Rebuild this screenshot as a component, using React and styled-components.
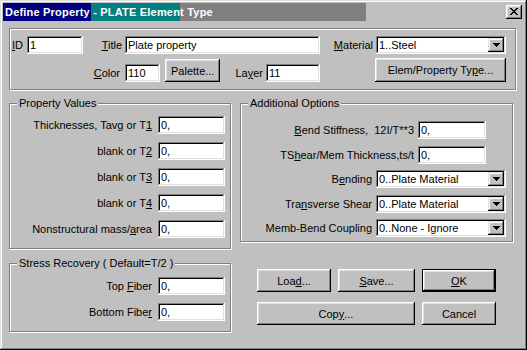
import React from 'react'
import styled, { createGlobalStyle } from 'styled-components'

const Global = createGlobalStyle`
  html, body { margin: 0; padding: 0; background: #c0c0c0; }
  body {
    font-family: "Liberation Sans", Arial, sans-serif;
    font-size: 11px;
    color: #000;
  }
  * { box-sizing: border-box; }
`

const Window = styled.div`
  width: 527px;
  height: 350px;
  background: #c0c0c0;
  padding: 3px;
  box-shadow: inset -1px -1px #000, inset 1px 1px #dfdfdf,
    inset -2px -2px #808080, inset 2px 2px #fff;
  display: flex;
  flex-direction: column;
`

const TitleBar = styled.div`
  height: 18px;
  display: flex;
  align-items: center;
  justify-content: space-between;
  padding: 0 2px;
  background: linear-gradient(
    to right,
    #000080 0 88px,
    #008080 88px 177px,
    #808080 177px 363px,
    #c0c0c0 363px
  );
`

const TitleText = styled.span`
  color: #fff;
  font-weight: bold;
  font-size: 11px;
  letter-spacing: 0.2px;
`

const CloseBtn = styled.div`
  width: 16px;
  height: 14px;
  display: flex;
  align-items: center;
  justify-content: center;
  background: #c0c0c0;
  box-shadow: inset -1px -1px #000, inset 1px 1px #fff,
    inset -2px -2px #808080, inset 2px 2px #dfdfdf;
  padding: 0 1px 1px 0;
`

const Content = styled.div`
  padding: 7px 0 0 6px;
`

const Group = styled.div`
  position: relative;
  width: ${p => p.$w}px;
  height: ${p => p.$h}px;
  border: 1px solid #808080;
  box-shadow: inset 1px 1px #fff, 1px 1px #fff;
`

const Legend = styled.span`
  position: absolute;
  top: -7px;
  left: 7px;
  padding: 0 2px;
  line-height: 13px;
  background: #c0c0c0;
`

const TopGrid = styled.div`
  display: grid;
  grid-template-columns: 15px 56px 42px 195px 56px 130px;
  grid-template-rows: 18px 24px;
  row-gap: 4px;
  align-items: end;
  padding: 7px 0 0 2px;
`

const Label = styled.label`
  white-space: nowrap;
  align-self: center;
  justify-self: ${p => p.$align || 'end'};
  padding-right: ${p => p.$pr ?? 3}px;
`

const RowLabel = styled(Label)`
  align-self: end;
  line-height: 18px;
`

const Field = styled.input`
  width: ${p => (p.$w ? `${p.$w}px` : '100%')};
  height: 18px;
  border: none;
  outline: none;
  margin: 0;
  padding: 0 3px;
  font: inherit;
  color: #000;
  background: #fff;
  box-shadow: inset -1px -1px #fff, inset 1px 1px #808080,
    inset -2px -2px #dfdfdf, inset 2px 2px #000;
  grid-column: ${p => p.$col || 'auto'};
`

const SelectBox = styled.div`
  height: 18px;
  display: flex;
  align-items: center;
  justify-content: space-between;
  padding: 2px 2px 2px 3px;
  background: #fff;
  white-space: nowrap;
  box-shadow: inset -1px -1px #fff, inset 1px 1px #808080,
    inset -2px -2px #dfdfdf, inset 2px 2px #000;
  grid-column: ${p => p.$col || 'auto'};
`

const ArrowBtn = styled.div`
  flex: none;
  width: 16px;
  height: 14px;
  display: flex;
  align-items: center;
  justify-content: center;
  background: #c0c0c0;
  box-shadow: inset -1px -1px #000, inset 1px 1px #dfdfdf,
    inset -2px -2px #808080, inset 2px 2px #fff;
`

const Button = styled.button`
  height: ${p => p.$h || 23}px;
  width: ${p => (p.$w ? `${p.$w}px` : '100%')};
  margin: 0;
  padding: 0;
  display: flex;
  align-items: center;
  justify-content: center;
  border: ${p => (p.$default ? '1px solid #000' : 'none')};
  font: inherit;
  color: #000;
  background: #c0c0c0;
  box-shadow: inset -1px -1px #000, inset 1px 1px #fff,
    inset -2px -2px #808080, inset 2px 2px #dfdfdf;
  grid-column: ${p => p.$col || 'auto'};
`

const SubRow = styled.div`
  display: flex;
  align-items: flex-end;
`

const Middle = styled.div`
  display: flex;
  gap: 9px;
  margin-top: 13px;
`

const Column = styled.div`
  display: flex;
  flex-direction: column;
  gap: ${p => p.$gap || 0}px;
`

const FormGrid = styled.div`
  display: grid;
  grid-template-columns: ${p => p.$cols};
  grid-auto-rows: 18px;
  column-gap: ${p => p.$cg}px;
  row-gap: ${p => p.$rg}px;
  padding: ${p => p.$pt}px ${p => p.$pr}px 0 0;
`

const GridLabel = styled.span`
  justify-self: end;
  align-self: center;
  white-space: nowrap;
  grid-column: ${p => p.$col || 'auto'};
`

const ButtonGrid = styled.div`
  display: grid;
  grid-template-columns: 74px 77px 74px;
  grid-template-rows: 23px 23px;
  column-gap: 7px;
  row-gap: 10px;
  margin: 27px 0 0 17px;
`

const Arrow = () => (
  <svg width="7" height="4" viewBox="0 0 7 4" shapeRendering="crispEdges">
    <path d="M0 0h7v1h-1v1h-1v1h-1v1h-1v-1h-1v-1h-1v-1h-1z" fill="#000" />
  </svg>
)

const CloseGlyph = () => (
  <svg width="8" height="7" viewBox="0 0 8 7" shapeRendering="crispEdges">
    <path
      d="M0 0h2v1h1v1h2v-1h1v-1h2v1h-1v1h-1v1h-1v1h1v1h1v1h1v1h-2v-1h-1v-1h-2v1h-1v1h-2v-1h1v-1h1v-1h1v-1h-1v-1h-1v-1h-1z"
      fill="#000"
    />
  </svg>
)

const Select = ({ value, col }) => (
  <SelectBox $col={col}>
    <span>{value}</span>
    <ArrowBtn><Arrow /></ArrowBtn>
  </SelectBox>
)

const propRows = [
  <>Thicknesses, Tavg or T<u>1</u></>,
  <>blank or T<u>2</u></>,
  <>blank or T<u>3</u></>,
  <>blank or T<u>4</u></>,
  <>Nonstructural mass/<u>a</u>rea</>,
]

const App = () => (
  <>
    <Global />
    <Window>
      <TitleBar>
        <TitleText>Define Property - PLATE Element Type</TitleText>
        <CloseBtn><CloseGlyph /></CloseBtn>
      </TitleBar>
      <Content>
        <Group $w={507} $h={62}>
          <TopGrid>
            <Label $align="start" $pr={0}><u>I</u>D</Label>
            <Field $w={56} defaultValue="1" readOnly />
            <Label><u>T</u>itle</Label>
            <Field defaultValue="Plate property" readOnly />
            <Label><u>M</u>aterial</Label>
            <Select value="1..Steel" />

            <span />
            <span />
            <RowLabel $pr={5}><u>C</u>olor</RowLabel>
            <SubRow>
              <Field $w={35} defaultValue="110" readOnly />
              <Button as="div" $w={57} style={{ marginLeft: 5 }}>Palette...</Button>
              <RowLabel style={{ marginLeft: 15 }}>La<u>y</u>er</RowLabel>
              <Field $w={54} defaultValue="11" readOnly />
            </SubRow>
            <span />
            <Button $h={24} $w={131} style={{ marginLeft: -1 }}>Elem/Property Ty<u>p</u>e...</Button>
          </TopGrid>
        </Group>

        <Middle>
          <Column $gap={14}>
            <Group $w={222} $h={146}>
              <Legend>Property Values</Legend>
              <FormGrid $cols="1fr 67px" $cg={6} $rg={8} $pt={12} $pr={5}>
                {propRows.map((label, i) => (
                  <React.Fragment key={i}>
                    <GridLabel>{label}</GridLabel>
                    <Field defaultValue="0," readOnly />
                  </React.Fragment>
                ))}
              </FormGrid>
            </Group>
            <Group $w={222} $h={69}>
              <Legend>Stress Recovery ( Default=T/2 )</Legend>
              <FormGrid $cols="1fr 67px" $cg={6} $rg={8} $pt={13} $pr={5}>
                <GridLabel>Top <u>F</u>iber</GridLabel>
                <Field defaultValue="0," readOnly />
                <GridLabel>Bottom Fibe<u>r</u></GridLabel>
                <Field defaultValue="0," readOnly />
              </FormGrid>
            </Group>
          </Column>

          <Column>
            <Group $w={273} $h={139}>
              <Legend>Additional Options</Legend>
              <FormGrid $cols="1fr 38px 88px" $cg={4} $rg={6.5} $pt={17} $pr={6}>
                <GridLabel $col="1 / 3"><u>B</u>end Stiffness,&nbsp; 12I/T**3</GridLabel>
                <Field $w={68} defaultValue="0," readOnly />
                <GridLabel $col="1 / 3">TS<u>h</u>ear/Mem Thickness,ts/t</GridLabel>
                <Field $w={68} defaultValue="0," readOnly />
                <GridLabel>B<u>e</u>nding</GridLabel>
                <Select col="2 / 4" value="0..Plate Material" />
                <GridLabel>Tra<u>n</u>sverse Shear</GridLabel>
                <Select col="2 / 4" value="0..Plate Material" />
                <GridLabel>Memb-Bend Coupling</GridLabel>
                <Select col="2 / 4" value="0..None - Ignore" />
              </FormGrid>
            </Group>
            <ButtonGrid>
              <Button>Loa<u>d</u>...</Button>
              <Button><u>S</u>ave...</Button>
              <Button $default><u>O</u>K</Button>
              <Button $col="1 / 3">Cop<u>y</u>...</Button>
              <Button>Cancel</Button>
            </ButtonGrid>
          </Column>
        </Middle>
      </Content>
    </Window>
  </>
)

export default App
